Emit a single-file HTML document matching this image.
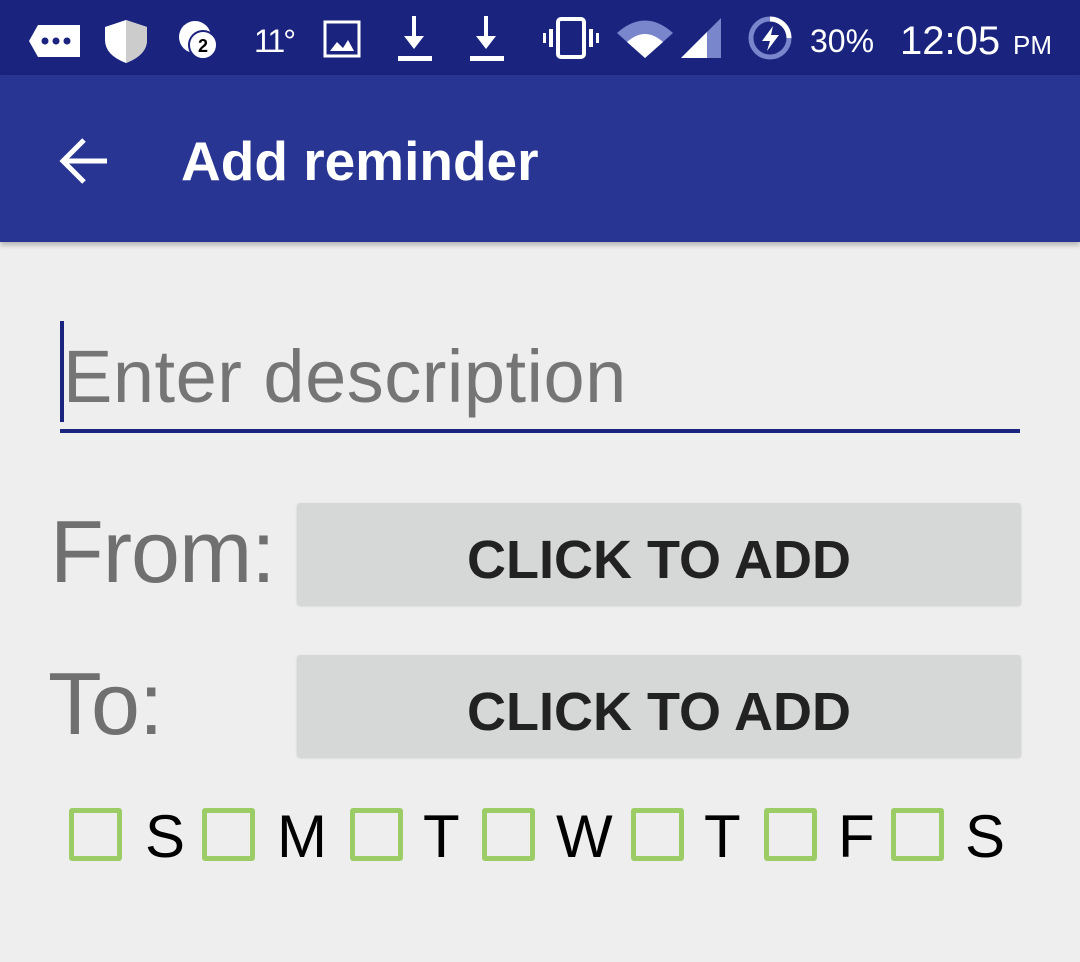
<!DOCTYPE html>
<html><head><meta charset="utf-8"><style>
*{margin:0;padding:0;box-sizing:border-box}
body{width:1080px;height:962px;overflow:hidden;background:#eeeeee;font-family:"Liberation Sans",sans-serif;position:relative}
.a{position:absolute}
.sb{left:0;top:0;width:1080px;height:75px;background:#1a237e}
.tb{left:0;top:75px;width:1080px;height:167px;background:#283593;box-shadow:0 3px 5px rgba(0,0,0,.25)}
.w{color:#fff}
.btn{left:297px;width:724px;height:102px;background:#d6d7d7;border-radius:3px;box-shadow:0 1px 2px rgba(0,0,0,.15);font-weight:bold;font-size:54px;color:#222;text-align:center;line-height:114px}
.lbl{color:#707070;font-size:88px;letter-spacing:-1px}
.cb{top:808px;width:53px;height:53px;border:5px solid #9ccc65;border-radius:3px}
.d{top:805px;font-size:60px;color:#000;line-height:64px}
</style></head><body>
<div class="a sb"></div>
<svg class="a" style="left:0;top:0" width="1080" height="75">
<g fill="#fff">
<path d="M38 25 H80 V57 H38 L29 41 Z"/>
<circle cx="45" cy="41" r="3.5" fill="#1a237e"/><circle cx="56" cy="41" r="3.5" fill="#1a237e"/><circle cx="67" cy="41" r="3.5" fill="#1a237e"/>
<path d="M105 27 L126 20 L147 27 V40 Q147 55 126 63 Q105 55 105 40 Z"/>
<path d="M126 20 L147 27 V40 Q147 55 126 63 Z" fill="#ccc"/>
<circle cx="195" cy="37" r="16"/>
<circle cx="203" cy="45" r="14" stroke="#1a237e" stroke-width="2"/>
<text x="203" y="52" font-size="18" font-weight="bold" fill="#000" text-anchor="middle" font-family="Liberation Sans">2</text>
<text x="254" y="52" font-size="32" fill="#fff" font-family="Liberation Sans" letter-spacing="-2">11°</text>
<rect x="325" y="22" width="34" height="34" fill="none" stroke="#fff" stroke-width="3"/>
<path d="M330 51 L337 42 L343 48 L348 40 L354 51 Z"/>
<path d="M412 16 h4 v20 h8 l-10 13 l-10 -13 h8 Z"/><rect x="398" y="56" width="34" height="5"/>
<path d="M484 16 h4 v20 h8 l-10 13 l-10 -13 h8 Z"/><rect x="470" y="56" width="34" height="5"/>
<rect x="558" y="19" width="26" height="38" rx="3" fill="none" stroke="#fff" stroke-width="4"/>
<rect x="549" y="29" width="4" height="18"/><rect x="543" y="33" width="3" height="10"/>
<rect x="589" y="29" width="4" height="18"/><rect x="596" y="33" width="3" height="10"/>
<path d="M617 33 Q645 8 673 33 L645 58 Z" fill="#7986cb"/>
<path d="M627 42 Q645 26 663 42 L645 58 Z"/>
<path d="M721 18 V58 H681 Z" fill="#7986cb"/><path d="M707 32 V58 H681 Z"/>
<circle cx="770" cy="38" r="19" fill="none" stroke="#7986cb" stroke-width="5"/>
<path d="M770 19 A19 19 0 0 1 789 38" fill="none" stroke="#fff" stroke-width="5"/>
<path d="M773 26 L762 41 H770 L767 51 L779 35 H771 Z"/>
</g>
<text x="810" y="52" font-size="32" fill="#fff" font-family="Liberation Sans">30%</text>
<text x="900" y="54" font-size="40" fill="#fff" font-family="Liberation Sans">12:05</text>
<text x="1013" y="54" font-size="26" fill="#fff" font-family="Liberation Sans">PM</text>
</svg>
<div class="a tb"></div>
<svg class="a" style="left:58px;top:137px" width="52" height="48"><path d="M4 24 H49 M26 3 L5 24 L26 45" fill="none" stroke="#fff" stroke-width="5"/></svg>
<div class="a w" style="left:181px;top:128px;font-size:55px;font-weight:bold;line-height:66px">Add reminder</div>
<div class="a" style="left:60px;top:321px;width:4px;height:101px;background:#1a237e"></div>
<div class="a" style="left:63px;top:335px;font-size:74px;color:#757575;line-height:84px;letter-spacing:0.5px">Enter description</div>
<div class="a" style="left:60px;top:429px;width:960px;height:4px;background:#1a237e"></div>
<div class="a lbl" style="left:50px;top:502px;line-height:100px">From:</div>
<div class="a btn" style="top:503px">CLICK TO ADD</div>
<div class="a lbl" style="left:48px;top:654px;line-height:100px">To:</div>
<div class="a btn" style="top:655px">CLICK TO ADD</div>
<div class="a cb" style="left:69px"></div><div class="a d" style="left:145px">S</div>
<div class="a cb" style="left:202px"></div><div class="a d" style="left:277px">M</div>
<div class="a cb" style="left:350px"></div><div class="a d" style="left:423px">T</div>
<div class="a cb" style="left:482px"></div><div class="a d" style="left:556px">W</div>
<div class="a cb" style="left:631px"></div><div class="a d" style="left:704px">T</div>
<div class="a cb" style="left:764px"></div><div class="a d" style="left:838px">F</div>
<div class="a cb" style="left:891px"></div><div class="a d" style="left:965px">S</div>
</body></html>
